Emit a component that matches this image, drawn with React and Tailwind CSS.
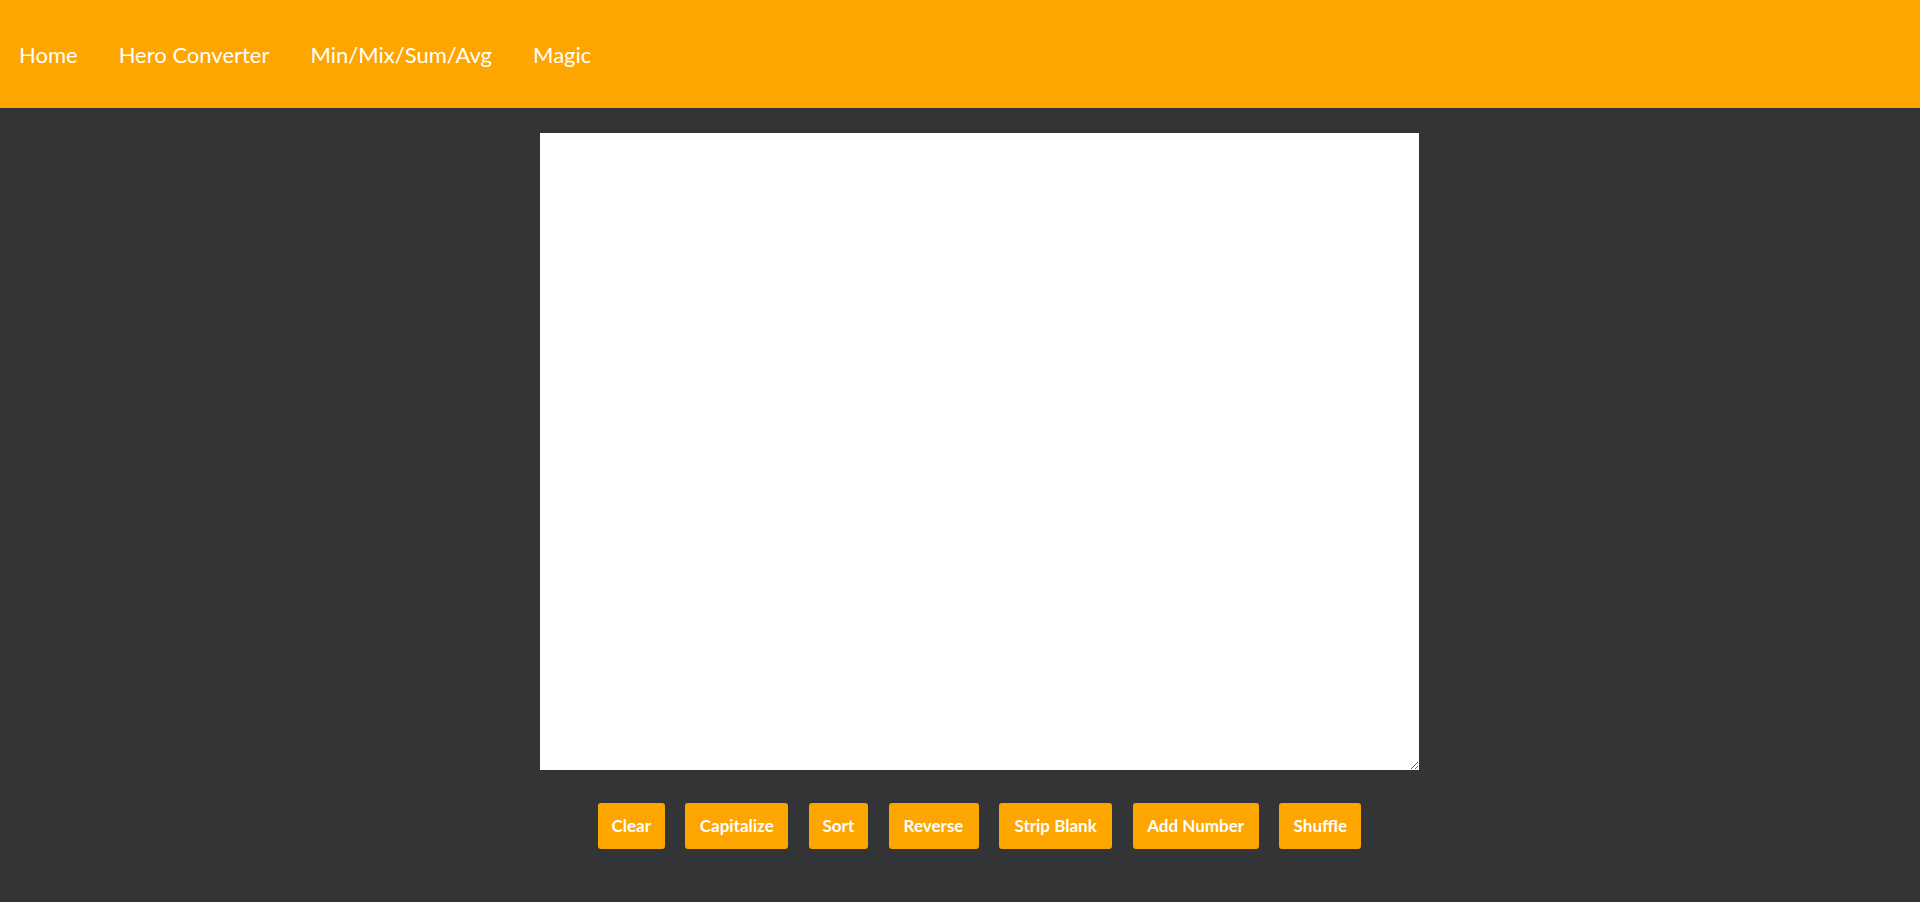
import React from "react";

const links = ["Home", "Hero Converter", "Min/Mix/Sum/Avg", "Magic"];
const buttons = [
  { t: "Clear", w: "w-[67px]" },
  { t: "Capitalize", w: "w-[103px]" },
  { t: "Sort", w: "w-[59px]" },
  { t: "Reverse", w: "w-[90px]" },
  { t: "Strip Blank", w: "w-[113px]" },
  { t: "Add Number", w: "w-[126px]" },
  { t: "Shuffle", w: "w-[82px]" },
];

export default function App() {
  return (
    <div className="min-h-[902px] bg-[#333436]" style={{ fontFamily: "Lato, 'Noto Sans', sans-serif" }}>
      <nav className="h-[108px] bg-[#FFA500] flex items-center pl-[19px] gap-[41px] pt-[2px]">
        {links.map((l) => (
          <a key={l} href="#" className="text-white text-[22px] leading-none">
            {l}
          </a>
        ))}
      </nav>
      <main className="flex flex-col items-center pt-[25px] pl-[39px]">
        <textarea className="w-[879px] h-[637px] bg-white border-0 outline-none block p-0 resize overflow-hidden" />
        <div className="flex gap-[20.6px] mt-[33px]">
          {buttons.map((b) => (
            <button
              key={b.t}
              className={`${b.w} h-[46px] bg-[#FFA500] text-white font-bold text-[17px] rounded-[3px] text-center`}
            >
              {b.t}
            </button>
          ))}
        </div>
      </main>
    </div>
  );
}
